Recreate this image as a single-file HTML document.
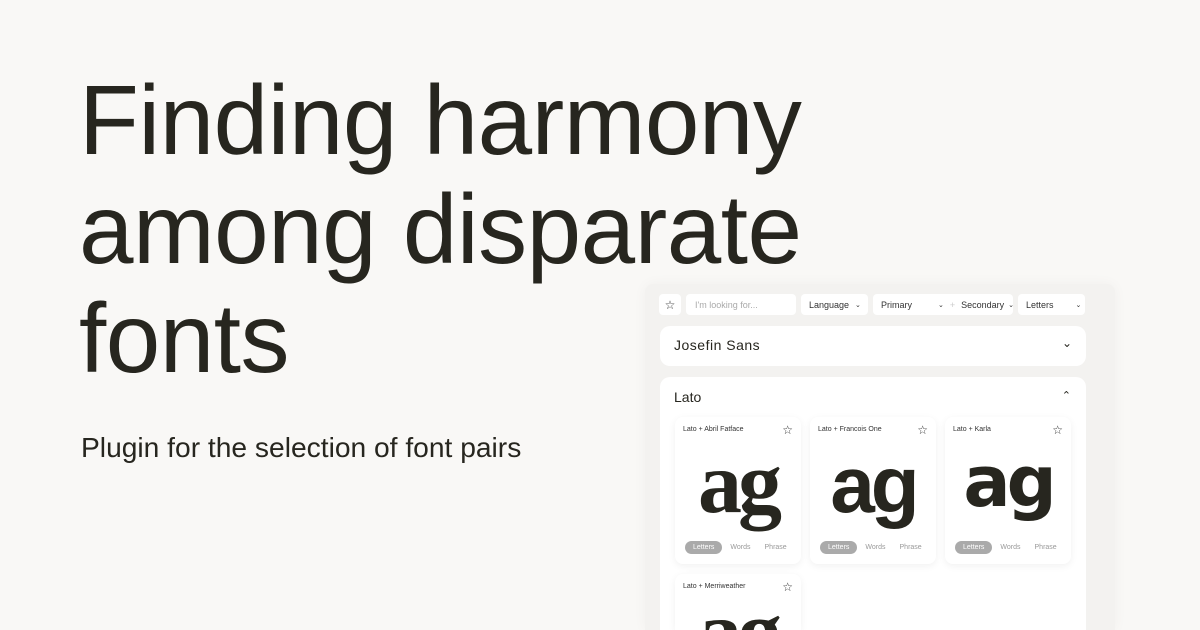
<!DOCTYPE html>
<html><head><meta charset="utf-8"><style>
*{margin:0;padding:0;box-sizing:border-box}
html,body{width:1200px;height:630px;overflow:hidden}
body{background:#f9f8f6;font-family:"Liberation Sans",sans-serif;color:#27261f;position:relative}
h1{position:absolute;left:79px;top:66px;font-size:98px;font-weight:400;line-height:109px;letter-spacing:-0.5px}
.sub{position:absolute;left:81px;top:431px;font-size:28.2px;color:#27261f}
.panel{position:absolute;left:645px;top:284px;width:470px;height:346px;background:#f3f2f0;border-radius:8px 8px 0 0;box-shadow:0 0 14px rgba(0,0,0,.04)}
.el{position:absolute;background:#fff;border-radius:4px;font-size:9px;color:#333;display:flex;align-items:center}
.box{position:absolute;background:#fff;border-radius:10px}
.card{position:absolute;width:126px;height:147px;background:#fff;border-radius:8px;box-shadow:0 2px 8px rgba(0,0,0,.06);overflow:hidden}
.card .t{position:absolute;left:8px;top:9px;font-size:7px;color:#333}
.card .s{position:absolute;right:8px;top:6px;font-size:12px;color:#333}
.card .ag{position:absolute;left:0;right:0;top:16px;text-align:center;font-size:88px;font-weight:700;font-family:"Liberation Serif",serif;letter-spacing:-4px}
.card .b{position:absolute;left:10px;top:124px;display:flex;font-size:7px;color:#999;align-items:center}
.pill{background:#aaa;color:#fff;border-radius:8px;padding:3px 8px;margin-right:8px}
</style></head><body>
<h1>Finding harmony<br>among disparate<br>fonts</h1>
<div class="sub">Plugin for the selection of font pairs</div>
<div class="panel"></div>
<div class="el" style="left:659px;top:294px;width:22px;height:21px;justify-content:center;font-size:12px">☆</div>
<div class="el" style="left:686px;top:294px;width:110px;height:21px;padding-left:9px;color:#aaa">I'm looking for...</div>
<div class="el" style="left:801px;top:294px;width:67px;height:21px;padding-left:8px">Language <span style="margin-left:6px;font-size:7px">⌄</span></div>
<div class="el" style="left:873px;top:294px;width:140px;height:21px;padding-left:8px">Primary<span style="margin-left:26px;font-size:7px">⌄</span><span style="margin-left:6px;color:#ccc">+</span><span style="margin-left:6px">Secondary</span><span style="margin-left:4px;font-size:7px">⌄</span></div>
<div class="el" style="left:1018px;top:294px;width:67px;height:21px;padding-left:8px">Letters<span style="margin-left:22px;font-size:7px">⌄</span></div>
<div class="box" style="left:660px;top:326px;width:426px;height:40px"><div style="position:absolute;left:14px;top:11px;font-size:14px;letter-spacing:.5px">Josefin Sans</div><div style="position:absolute;right:14px;top:10px;font-size:12px">⌄</div></div>
<div class="box" style="left:660px;top:377px;width:426px;height:253px;border-radius:10px 10px 0 0"><div style="position:absolute;left:14px;top:12px;font-size:14px">Lato</div><div style="position:absolute;right:15px;top:12px;font-size:11px">⌃</div></div>
<div class="card" style="left:675px;top:417px"><div class="t">Lato + Abril Fatface</div><div class="s">☆</div><div class="ag">ag</div><div class="b"><span class="pill">Letters</span><span style="margin-right:14px">Words</span><span>Phrase</span></div></div>
<div class="card" style="left:810px;top:417px"><div class="t">Lato + Francois One</div><div class="s">☆</div><div class="ag" style="font-family:'Liberation Sans',sans-serif;font-size:80px;top:22px">ag</div><div class="b"><span class="pill">Letters</span><span style="margin-right:14px">Words</span><span>Phrase</span></div></div>
<div class="card" style="left:945px;top:417px"><div class="t">Lato + Karla</div><div class="s">☆</div><div class="ag" style="font-family:'DejaVu Sans',sans-serif;font-size:70px;top:24px">ag</div><div class="b"><span class="pill">Letters</span><span style="margin-right:14px">Words</span><span>Phrase</span></div></div>
<div class="card" style="left:675px;top:574px;height:56px;border-radius:8px 8px 0 0"><div class="t">Lato + Merriweather</div><div class="s">☆</div><div class="ag" style="top:8px">ag</div></div>
</body></html>
